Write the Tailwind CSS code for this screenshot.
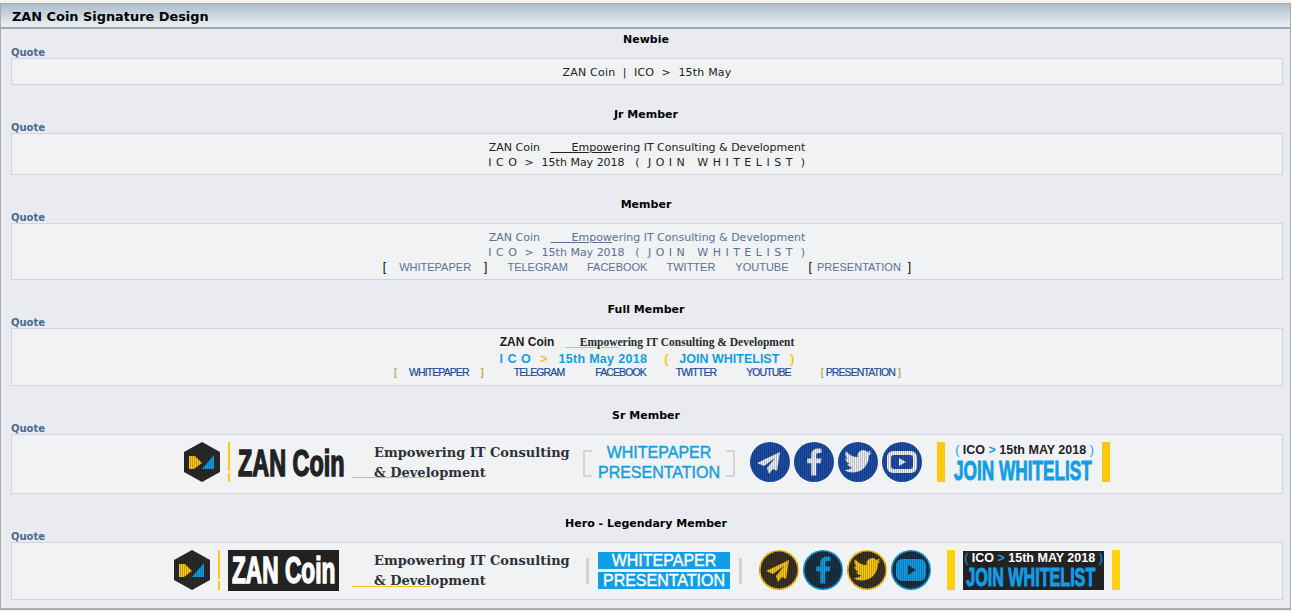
<!DOCTYPE html>
<html lang="en">
<head>
    <meta charset="UTF-8">
    <title>ZAN Coin Signature Design</title>
    <script src="https://cdn.jsdelivr.net/npm/@tailwindcss/browser@4"></script>
</head>
<body class="bg-[#f2f2f0] font-['DejaVu_Sans',Verdana,sans-serif] text-[11px] leading-[15px] text-[#222]">
    <svg class="absolute w-0 h-0">
        <defs>
            <pattern id="bars" width="2" height="2" patternUnits="userSpaceOnUse">
                <rect width="1" height="2" fill="#000" opacity="0.22"></rect>
            </pattern>
            <symbol id="plane" viewBox="0 0 40 40">
                <path d="M30 10 L7 21 L14 24 L25 16 L17 26 L19 32 L23 27 L27 29 Z"></path>
            </symbol>
            <symbol id="fb" viewBox="0 0 40 40">
                <path d="M22.5 35 V21.5 H27.5 L28.2 16 H22.5 V13 C22.5 11 23.2 10 25.2 10 H28.3 V5.3 C27.4 5.2 25.8 5 24 5 C19.8 5 17 7.6 17 12.3 V16 H12.5 V21.5 H17 V35 Z"></path>
            </symbol>
            <symbol id="bird" viewBox="0 0 24 24">
                <path d="M23 4.6a8.6 8.6 0 0 1-2.6.7 4.5 4.5 0 0 0 2-2.5 9 9 0 0 1-2.9 1.1 4.5 4.5 0 0 0-7.7 4.1A12.8 12.8 0 0 1 2.5 3.3a4.5 4.5 0 0 0 1.4 6 4.5 4.5 0 0 1-2-.6v.1a4.5 4.5 0 0 0 3.6 4.4 4.5 4.5 0 0 1-2 .1 4.5 4.5 0 0 0 4.2 3.1A9 9 0 0 1 1 18.3a12.7 12.7 0 0 0 6.9 2c8.3 0 12.8-6.9 12.8-12.8v-.6A9.1 9.1 0 0 0 23 4.6z"></path>
            </symbol>
            <symbol id="hex" viewBox="0 0 36 40">
                <path d="M18 0 L36 10 V30 L18 40 L0 30 V10 Z" fill="#2b2b2b"></path>
                <path d="M5 14 H11 L18 21 L10 27 H5 Z" fill="#fdc70c"></path>
                <path d="M30 13 V27 H18 Z" fill="#129ee6"></path>
                <path d="M18 0 L36 10 V30 L18 40 L0 30 V10 Z" fill="url(#bars)"></path>
            </symbol>
        </defs>
    </svg>

    <div class="h-[3px]"></div>
    <div class="border-x border-b-2 border-t border-[#a7abb0] bg-[#e9ebf0] h-[607px]">
        <div class="h-[25px] border-b-2 border-[#a0a8b0] bg-gradient-to-b from-[#aebdca] to-[#eef2f6] pl-[11px] font-bold text-[12.9px] leading-[26px] text-black">ZAN Coin Signature Design</div>

        <section class="pt-[3px] pl-[10px] pr-[7px]">
            <h2 class="text-center font-bold text-black h-[15px] pr-[2px]">Newbie</h2>
            <div class="h-[11px] font-bold text-[10px] leading-[11px] text-[#476c8e]">Quote</div>
            <div class="border border-[#d1d5e3] bg-[#f1f2f4] h-[27px] pt-[6px] text-center whitespace-pre tracking-[0.2px]">ZAN Coin  |  ICO  &gt;  15th May</div>
        </section>

        <section class="pt-[22px] pl-[10px] pr-[7px]">
            <h2 class="text-center font-bold text-black h-[15px] pr-[2px]">Jr Member</h2>
            <div class="h-[11px] font-bold text-[10px] leading-[11px] text-[#476c8e]">Quote</div>
            <div class="border border-[#d1d5e3] bg-[#f1f2f4] h-[42px] pt-[6px] text-center">
                <div class="whitespace-pre">ZAN Coin   <span class="underline">      Empow</span>ering IT Consulting &amp; Development</div>
                <div class="whitespace-pre"><span class="tracking-[0.5px]">I C O</span>  &gt;  <span class="ml-[1px]">15th May 2018</span>   <span class="tracking-[0.5px]">(  J O I N   W H I T E L I S T  )</span></div>
            </div>
        </section>

        <section class="pt-[22px] pl-[10px] pr-[7px]">
            <h2 class="text-center font-bold text-black h-[15px] pr-[2px]">Member</h2>
            <div class="h-[11px] font-bold text-[10px] leading-[11px] text-[#476c8e]">Quote</div>
            <div class="border border-[#d1d5e3] bg-[#f1f2f4] h-[57px] pt-[6px] text-center text-[#5a7094]">
                <div class="whitespace-pre">ZAN Coin   <span class="underline">      Empow</span>ering IT Consulting &amp; Development</div>
                <div class="whitespace-pre"><span class="tracking-[0.5px]">I C O</span>  &gt;  <span class="ml-[1px]">15th May 2018</span>   <span class="tracking-[0.5px]">(  J O I N   W H I T E L I S T  )</span></div>
                <div class="flex justify-center font-['Liberation_Sans',Arial,sans-serif] text-[11px]">
                    <span class="text-black text-[12px]">[</span><span class="ml-[13px]">WHITEPAPER</span><span class="ml-[13px] text-black text-[12px]">]</span><span class="ml-[20px]">TELEGRAM</span><span class="ml-[19px]">FACEBOOK</span><span class="ml-[19px]">TWITTER</span><span class="ml-[20px]">YOUTUBE</span><span class="ml-[20px] text-black text-[12px]">[</span><span class="ml-[5px]">PRESENTATION</span><span class="ml-[7px] text-black text-[12px]">]</span>
                </div>
            </div>
        </section>

        <section class="pt-[22px] pl-[10px] pr-[7px]">
            <h2 class="text-center font-bold text-black h-[15px] pr-[2px]">Full Member</h2>
            <div class="h-[11px] font-bold text-[10px] leading-[11px] text-[#476c8e]">Quote</div>
            <div class="border border-[#d1d5e3] bg-[#f1f2f4] h-[58px] pt-[6px] text-center font-['Liberation_Sans',Arial,sans-serif]">
                <div class="flex justify-center items-baseline h-[15px] whitespace-pre">
                    <b class="text-[12px] text-[#1c1c1c]">ZAN Coin</b><span class="ml-[11px] font-['Liberation_Serif',serif] font-bold text-[11.5px] text-[#2a2a2a] underline decoration-[#f5c518]">     Empow</span><span class="font-['Liberation_Serif',serif] font-bold text-[11.5px] text-[#2a2a2a]">ering IT Consulting &amp; Development</span>
                </div>
                <div class="flex justify-center font-bold text-[12.5px] h-[13px] mt-[2px] text-[#129ee6] whitespace-pre">
                    <span class="tracking-[0.5px]">I C O</span><span class="ml-[9px] text-[#f5c518]">&gt;</span><span class="ml-[11px] tracking-[0.3px]">15th May 2018</span><span class="ml-[17px] text-[#f5c518]">(</span><span class="ml-[11px]">JOIN WHITELIST</span><span class="ml-[11px] text-[#f5c518]">)</span>
                </div>
                <div class="flex justify-center text-[10.5px] tracking-[-0.9px] h-[14px] text-[#1c4a9c] [-webkit-text-stroke:0.2px_#1c4a9c] whitespace-pre">
                    <span class="text-[#f5c518]">[</span><span class="ml-[13px]">WHITEPAPER</span><span class="ml-[12px] text-[#f5c518]">]</span><span class="ml-[31px]">TELEGRAM</span><span class="ml-[31px]">FACEBOOK</span><span class="ml-[30px]">TWITTER</span><span class="ml-[30px]">YOUTUBE</span><span class="ml-[30px] text-[#f5c518]">[</span><span class="ml-[3px]">PRESENTATION</span><span class="ml-[3px] text-[#f5c518]">]</span>
                </div>
            </div>
        </section>

        <section class="pt-[22px] pl-[10px] pr-[7px]">
            <h2 class="text-center font-bold text-black h-[15px] pr-[2px]">Sr Member</h2>
            <div class="h-[11px] font-bold text-[10px] leading-[11px] text-[#476c8e]">Quote</div>
            <div class="border border-[#d1d5e3] bg-[#f1f2f4] h-[60px] pb-[4px] flex justify-center items-center">
                <svg width="36" height="40"><use href="#hex" width="36" height="40"></use></svg>
                <div class="ml-[8px] w-[2px] h-[40px] flex flex-col justify-between"><div class="h-[29px] bg-[#fdc70c]"></div><div class="h-[9px] bg-[#fdc70c]"></div></div>
                <div class="ml-[8px] mt-[4px] w-[107px] h-[32px] font-['Liberation_Sans',sans-serif] font-bold text-[36px] leading-[32px] text-[#222] whitespace-nowrap scale-x-[0.65] origin-left [-webkit-text-stroke:1.5px_#222]">ZAN Coin</div>
                <div class="relative ml-[29px] mt-[2px] w-[195px] font-['DejaVu_Serif',serif] font-bold text-[13px] leading-[20px] text-[#2e3038] whitespace-nowrap">
                    Empowering IT Consulting<br>&amp; Development
                    <div class="absolute left-[-22px] top-[34px] w-[78px] h-px bg-[#f5c518]"></div>
                </div>
                <div class="ml-[14px] mt-[2px] w-[9px] h-[27px] border-2 border-r-0 border-[#d3d4d6]"></div>
                <div class="mt-[2px] w-[134px] text-center font-['Liberation_Sans',sans-serif] text-[16px] leading-[20px] font-medium text-[#129ee6] [-webkit-text-stroke:0.4px_#129ee6]">WHITEPAPER<br>PRESENTATION</div>
                <div class="mt-[2px] w-[9px] h-[27px] border-2 border-l-0 border-[#d3d4d6]"></div>
                <svg class="ml-[15px]" width="40" height="40" viewBox="0 0 40 40"><circle cx="20" cy="20" r="20" fill="#1c4ea8"></circle><use href="#plane" width="40" height="40" fill="#eef1f5"></use><circle cx="20" cy="20" r="20" fill="url(#bars)"></circle></svg>
                <svg class="ml-[4px]" width="40" height="40" viewBox="0 0 40 40"><circle cx="20" cy="20" r="20" fill="#1c4ea8"></circle><use href="#fb" x="2" y="2" width="36" height="36" fill="#eef1f5"></use><circle cx="20" cy="20" r="20" fill="url(#bars)"></circle></svg>
                <svg class="ml-[4px]" width="40" height="40" viewBox="0 0 40 40"><circle cx="20" cy="20" r="20" fill="#1c4ea8"></circle><use href="#bird" x="5" y="5" width="30" height="30" fill="#eef1f5"></use><circle cx="20" cy="20" r="20" fill="url(#bars)"></circle></svg>
                <svg class="ml-[4px]" width="40" height="40" viewBox="0 0 40 40"><circle cx="20" cy="20" r="20" fill="#1c4ea8"></circle><rect x="5" y="9" width="30" height="22" rx="6" fill="#eef1f5"></rect><rect x="9" y="13" width="22" height="14" rx="3" fill="#1c4ea8"></rect><path d="M17 16 L24 20 L17 24 Z" fill="#eef1f5"></path><circle cx="20" cy="20" r="20" fill="url(#bars)"></circle></svg>
                <div class="ml-[15px] w-[8px] h-[40px] bg-[#fdc70c]"></div>
                <div class="ml-[9px] mt-[2px] w-[141px] h-[41px] font-['Liberation_Sans',sans-serif] text-center">
                    <div class="font-bold text-[12.5px] leading-[15px] text-[#222] whitespace-pre"><span class="font-normal text-[#129ee6]">(</span> ICO <span class="text-[#129ee6]">&gt;</span> 15th MAY 2018 <span class="font-normal text-[#129ee6]">)</span></div>
                    <div class="font-bold text-[28px] leading-[25px] text-left text-[#129ee6] whitespace-nowrap scale-x-[0.615] origin-left [-webkit-text-stroke:1px_#129ee6]">JOIN WHITELIST</div>
                </div>
                <div class="ml-[7px] w-[8px] h-[40px] bg-[#fdc70c]"></div>
            </div>
        </section>

        <section class="pt-[22px] pl-[10px] pr-[7px]">
            <h2 class="text-center font-bold text-black h-[15px] pr-[2px]">Hero - Legendary Member</h2>
            <div class="h-[11px] font-bold text-[10px] leading-[11px] text-[#476c8e]">Quote</div>
            <div class="border border-[#d1d5e3] bg-[#f1f2f4] h-[58px] pb-[2px] flex justify-center items-center">
                <svg width="36" height="40"><use href="#hex" width="36" height="40"></use></svg>
                <div class="ml-[8px] w-[2px] h-[40px] flex flex-col justify-between"><div class="h-[29px] bg-[#fdc70c]"></div><div class="h-[9px] bg-[#fdc70c]"></div></div>
                <div class="ml-[8px] w-[111px] h-[41px] bg-[#222] overflow-hidden pl-[4px] font-['Liberation_Sans',sans-serif] font-bold text-[36px] leading-[41px] text-white whitespace-nowrap"><div class="scale-x-[0.63] origin-left [-webkit-text-stroke:1.5px_#fff]">ZAN Coin</div></div>
                <div class="relative ml-[35px] mt-[2px] w-[195px] font-['DejaVu_Serif',serif] font-bold text-[13px] leading-[20px] text-[#2e3038] whitespace-nowrap">
                    Empowering IT Consulting<br>&amp; Development
                    <div class="absolute left-[-22px] top-[35px] w-[78px] h-px bg-[#f5c518]"></div>
                </div>
                <div class="ml-[17px] mt-[2px] w-[3px] h-[26px] bg-[#d0d1d3]"></div>
                <div class="ml-[9px] mt-[1px] w-[132px] text-center font-['Liberation_Sans',sans-serif] text-[16px] leading-[17px] font-medium text-white [-webkit-text-stroke:0.4px_#fff]">
                    <div class="bg-[#129ee6] h-[17px]">WHITEPAPER</div>
                    <div class="bg-[#129ee6] h-[17px] mt-[3px]">PRESENTATION</div>
                </div>
                <div class="ml-[9px] mt-[2px] w-[3px] h-[26px] bg-[#d0d1d3]"></div>
                <svg class="ml-[17px]" width="40" height="40" viewBox="0 0 40 40"><circle cx="20" cy="20" r="20" fill="#fdc70c"></circle><circle cx="20" cy="20" r="18.5" fill="#3a3228"></circle><use href="#plane" width="40" height="40" fill="#fdc70c"></use><circle cx="20" cy="20" r="20" fill="url(#bars)"></circle></svg>
                <svg class="ml-[4px]" width="40" height="40" viewBox="0 0 40 40"><circle cx="20" cy="20" r="20" fill="#129ee6"></circle><circle cx="20" cy="20" r="18.5" fill="#1d3042"></circle><use href="#fb" x="2" y="2" width="36" height="36" fill="#129ee6"></use><circle cx="20" cy="20" r="20" fill="url(#bars)"></circle></svg>
                <svg class="ml-[4px]" width="40" height="40" viewBox="0 0 40 40"><circle cx="20" cy="20" r="20" fill="#fdc70c"></circle><circle cx="20" cy="20" r="18.5" fill="#3a3228"></circle><use href="#bird" x="5" y="5" width="30" height="30" fill="#fdc70c"></use><circle cx="20" cy="20" r="20" fill="url(#bars)"></circle></svg>
                <svg class="ml-[4px]" width="40" height="40" viewBox="0 0 40 40"><circle cx="20" cy="20" r="20" fill="#129ee6"></circle><circle cx="20" cy="20" r="18.5" fill="#1d3042"></circle><rect x="5" y="9" width="30" height="22" rx="6" fill="#129ee6"></rect><path d="M17 15 L25 20 L17 25 Z" fill="#1d3042"></path><circle cx="20" cy="20" r="20" fill="url(#bars)"></circle></svg>
                <div class="ml-[16px] w-[8px] h-[40px] bg-[#fdd20c]"></div>
                <div class="ml-[8px] mt-[1px] w-[141px] h-[39px] bg-[#222] font-['Liberation_Sans',sans-serif] text-center">
                    <div class="font-bold text-[12.5px] leading-[14px] text-white whitespace-pre"><span class="font-normal text-[#129ee6]">(</span> ICO <span class="text-[#129ee6]">&gt;</span> 15th MAY 2018 <span class="font-normal text-[#129ee6]">)</span></div>
                    <div class="pl-[5px] font-bold text-[25px] leading-[25px] text-left text-[#129ee6] whitespace-nowrap scale-x-[0.645] origin-left [-webkit-text-stroke:1px_#129ee6]">JOIN WHITELIST</div>
                </div>
                <div class="ml-[8px] w-[8px] h-[40px] bg-[#fdd20c]"></div>
            </div>
        </section>
    </div>
</body>
</html>
